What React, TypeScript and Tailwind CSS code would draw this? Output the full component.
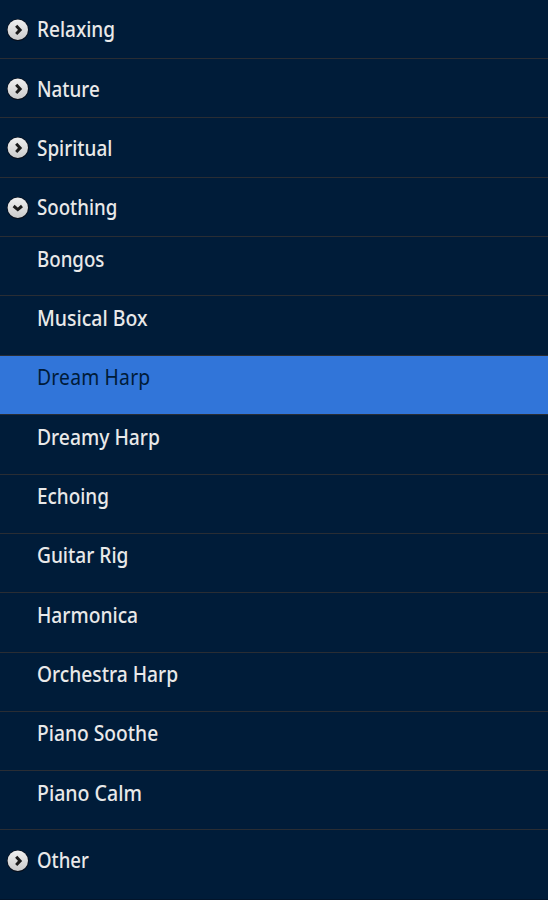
const rows: [string, string, string][] = [
  ["Relaxing", "h-[59px] pt-[1px]", "scale-x-[0.905] -translate-y-px"],
  ["Nature", "h-[59px] pt-[2px]", "scale-x-[0.895]"],
  ["Spiritual", "h-[60px] pt-[1px]", "scale-x-[0.9]"],
  ["Soothing", "h-[59px] pt-[2px]", "scale-x-[0.89] -translate-y-px"],
  ["Bongos", "h-[59px]", "scale-x-[0.89]"],
  ["Musical Box", "h-[60px]", "scale-x-[0.927]"],
  ["Dream Harp", "h-[59px]", "scale-x-[0.92] -translate-y-px"],
  ["Dreamy Harp", "h-[60px]", "scale-x-[0.918]"],
  ["Echoing", "h-[59px]", "scale-x-[0.9] -translate-y-px"],
  ["Guitar Rig", "h-[59px]", "scale-x-[0.91] -translate-y-px"],
  ["Harmonica", "h-[60px]", "scale-x-[0.915]"],
  ["Orchestra Harp", "h-[59px]", "scale-x-[0.915] -translate-y-px"],
  ["Piano Soothe", "h-[59px]", "scale-x-[0.915] -translate-y-px"],
  ["Piano Calm", "h-[59px]", "scale-x-[0.93]"],
  ["Other", "h-[70px] pb-[8px]", "scale-x-[0.885] -translate-y-px"],
];

function Marker({ open }: { open: boolean }) {
  return (
    <svg width="22" height="22" viewBox="0 0 22 22" className="shrink-0">
      <defs>
        <linearGradient id="disc" x1="0" y1="0" x2="0" y2="1">
          <stop offset="0" stopColor="#f0f0f0" />
          <stop offset="1" stopColor="#cbcbcb" />
        </linearGradient>
      </defs>
      <circle cx="10.9" cy="11" r="10.9" fill="#070e1a" />
      <circle cx="10.8" cy="10.8" r="10.2" fill="url(#disc)" />
      <path d={open ? "M6.6 9 10.8 12.6 15 9" : "M9.2 6.8 13.1 10.9 9.2 15"} fill="none" stroke="#1b1b1b" strokeWidth="3" />
    </svg>
  );
}

export default function App() {
  return (
    <main className="h-[900px] w-full overflow-hidden bg-[#001c39] font-['Noto_Sans','Open_Sans',sans-serif] text-[21px] leading-[28px] text-[#e9e9e9]">
      {rows.map(([name, h, width], i) => {
        const group = i < 4 || i === 14;
        const selected = name === "Dream Harp";
        return (
          <div key={name} className={`flex border-b ${i === 14 ? "border-[#02142a]" : "border-[#292d34]"} ${h} ${group ? "items-center gap-[8px] pl-[7px]" : "items-start pl-[37px] pt-[7.5px]"} ${selected ? "bg-[#3175d9] font-normal tracking-[0.2px] text-[#001b38]" : "font-medium"}`}>
            {group && <Marker open={name === "Soothing"} />}
            <span className={`origin-left whitespace-nowrap ${width}`}>{name}</span>
          </div>
        );
      })}
    </main>
  );
}
